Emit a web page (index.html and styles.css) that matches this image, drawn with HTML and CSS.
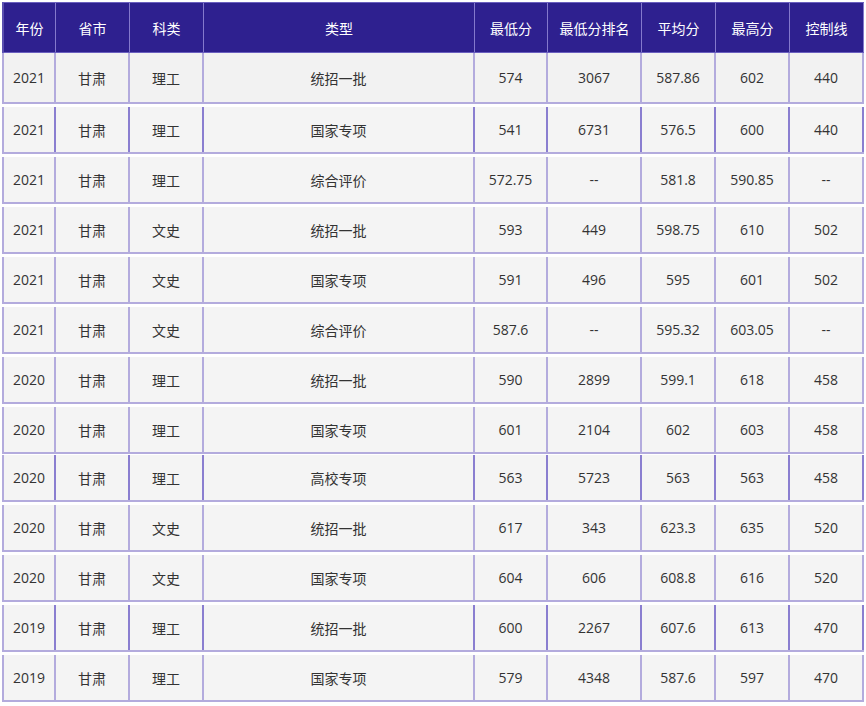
FILE: index.html
```html
<!DOCTYPE html>
<html lang="zh">
<head>
<meta charset="utf-8">
<title>分数线</title>
<link rel="stylesheet" href="styles.css">
</head>
<body>
<div class="table">
  <div class="row head">
    <div class="c">年份</div><div class="c">省市</div><div class="c">科类</div><div class="c">类型</div><div class="c">最低分</div><div class="c">最低分排名</div><div class="c">平均分</div><div class="c">最高分</div><div class="c">控制线</div>
  </div>
  <div class="row first">
    <div class="c">2021</div><div class="c">甘肃</div><div class="c">理工</div><div class="c">统招一批</div><div class="c">574</div><div class="c">3067</div><div class="c">587.86</div><div class="c">602</div><div class="c">440</div>
  </div>
  <div class="row dark">
    <div class="c">2021</div><div class="c">甘肃</div><div class="c">理工</div><div class="c">国家专项</div><div class="c">541</div><div class="c">6731</div><div class="c">576.5</div><div class="c">600</div><div class="c">440</div>
  </div>
  <div class="row">
    <div class="c">2021</div><div class="c">甘肃</div><div class="c">理工</div><div class="c">综合评价</div><div class="c">572.75</div><div class="c">--</div><div class="c">581.8</div><div class="c">590.85</div><div class="c">--</div>
  </div>
  <div class="row">
    <div class="c">2021</div><div class="c">甘肃</div><div class="c">文史</div><div class="c">统招一批</div><div class="c">593</div><div class="c">449</div><div class="c">598.75</div><div class="c">610</div><div class="c">502</div>
  </div>
  <div class="row">
    <div class="c">2021</div><div class="c">甘肃</div><div class="c">文史</div><div class="c">国家专项</div><div class="c">591</div><div class="c">496</div><div class="c">595</div><div class="c">601</div><div class="c">502</div>
  </div>
  <div class="row">
    <div class="c">2021</div><div class="c">甘肃</div><div class="c">文史</div><div class="c">综合评价</div><div class="c">587.6</div><div class="c">--</div><div class="c">595.32</div><div class="c">603.05</div><div class="c">--</div>
  </div>
  <div class="row">
    <div class="c">2020</div><div class="c">甘肃</div><div class="c">理工</div><div class="c">统招一批</div><div class="c">590</div><div class="c">2899</div><div class="c">599.1</div><div class="c">618</div><div class="c">458</div>
  </div>
  <div class="row">
    <div class="c">2020</div><div class="c">甘肃</div><div class="c">理工</div><div class="c">国家专项</div><div class="c">601</div><div class="c">2104</div><div class="c">602</div><div class="c">603</div><div class="c">458</div>
  </div>
  <div class="row dark tight">
    <div class="c">2020</div><div class="c">甘肃</div><div class="c">理工</div><div class="c">高校专项</div><div class="c">563</div><div class="c">5723</div><div class="c">563</div><div class="c">563</div><div class="c">458</div>
  </div>
  <div class="row">
    <div class="c">2020</div><div class="c">甘肃</div><div class="c">文史</div><div class="c">统招一批</div><div class="c">617</div><div class="c">343</div><div class="c">623.3</div><div class="c">635</div><div class="c">520</div>
  </div>
  <div class="row">
    <div class="c">2020</div><div class="c">甘肃</div><div class="c">文史</div><div class="c">国家专项</div><div class="c">604</div><div class="c">606</div><div class="c">608.8</div><div class="c">616</div><div class="c">520</div>
  </div>
  <div class="row dark">
    <div class="c">2019</div><div class="c">甘肃</div><div class="c">理工</div><div class="c">统招一批</div><div class="c">600</div><div class="c">2267</div><div class="c">607.6</div><div class="c">613</div><div class="c">470</div>
  </div>
  <div class="row">
    <div class="c">2019</div><div class="c">甘肃</div><div class="c">理工</div><div class="c">国家专项</div><div class="c">579</div><div class="c">4348</div><div class="c">587.6</div><div class="c">597</div><div class="c">470</div>
  </div>
</div>
</body>
</html>
```

FILE: styles.css
```css
html, body {
  margin: 0;
  padding: 0;
  background: #ffffff;
}

body {
  padding: 2px 0 0 2px;
  font-family: "Open Sans", "Noto Sans CJK SC", sans-serif;
  font-size: 14px;
  color: #333333;
}

.table {
  display: flex;
  flex-direction: column;
  width: 862px;
}

.row {
  display: grid;
  grid-template-columns: 52px 74px 74px 271px 73px 94px 74px 74px 74px;
  height: 47px;
  margin-top: 3px;
  background: #f4f4f4;
  border-left: 2px solid #b3abdd;
  border-bottom: 2px solid #b3abdd;
  box-sizing: border-box;
}

.row.first {
  margin-top: 0;
  height: 51px;
  background: #f2f2f2;
}

.row.tight {
  margin-top: 1px;
}

.c {
  display: flex;
  align-items: center;
  justify-content: center;
  border-right: 2px solid #b3abdd;
  white-space: nowrap;
}

.row.dark .c {
  border-right-color: #8a7ed0;
}

.row.head {
  margin-top: 0;
  height: 51px;
  background: #2e208f;
  color: #ffffff;
  border-left: 2px solid #5a4fb0;
  border-top: 1px solid #6a5fbf;
  border-bottom: 1px solid #6a5fbf;
}

.row.head .c {
  border-right: 1px solid #8479cc;
  font-family: "Noto Sans CJK SC", sans-serif;
}
```
